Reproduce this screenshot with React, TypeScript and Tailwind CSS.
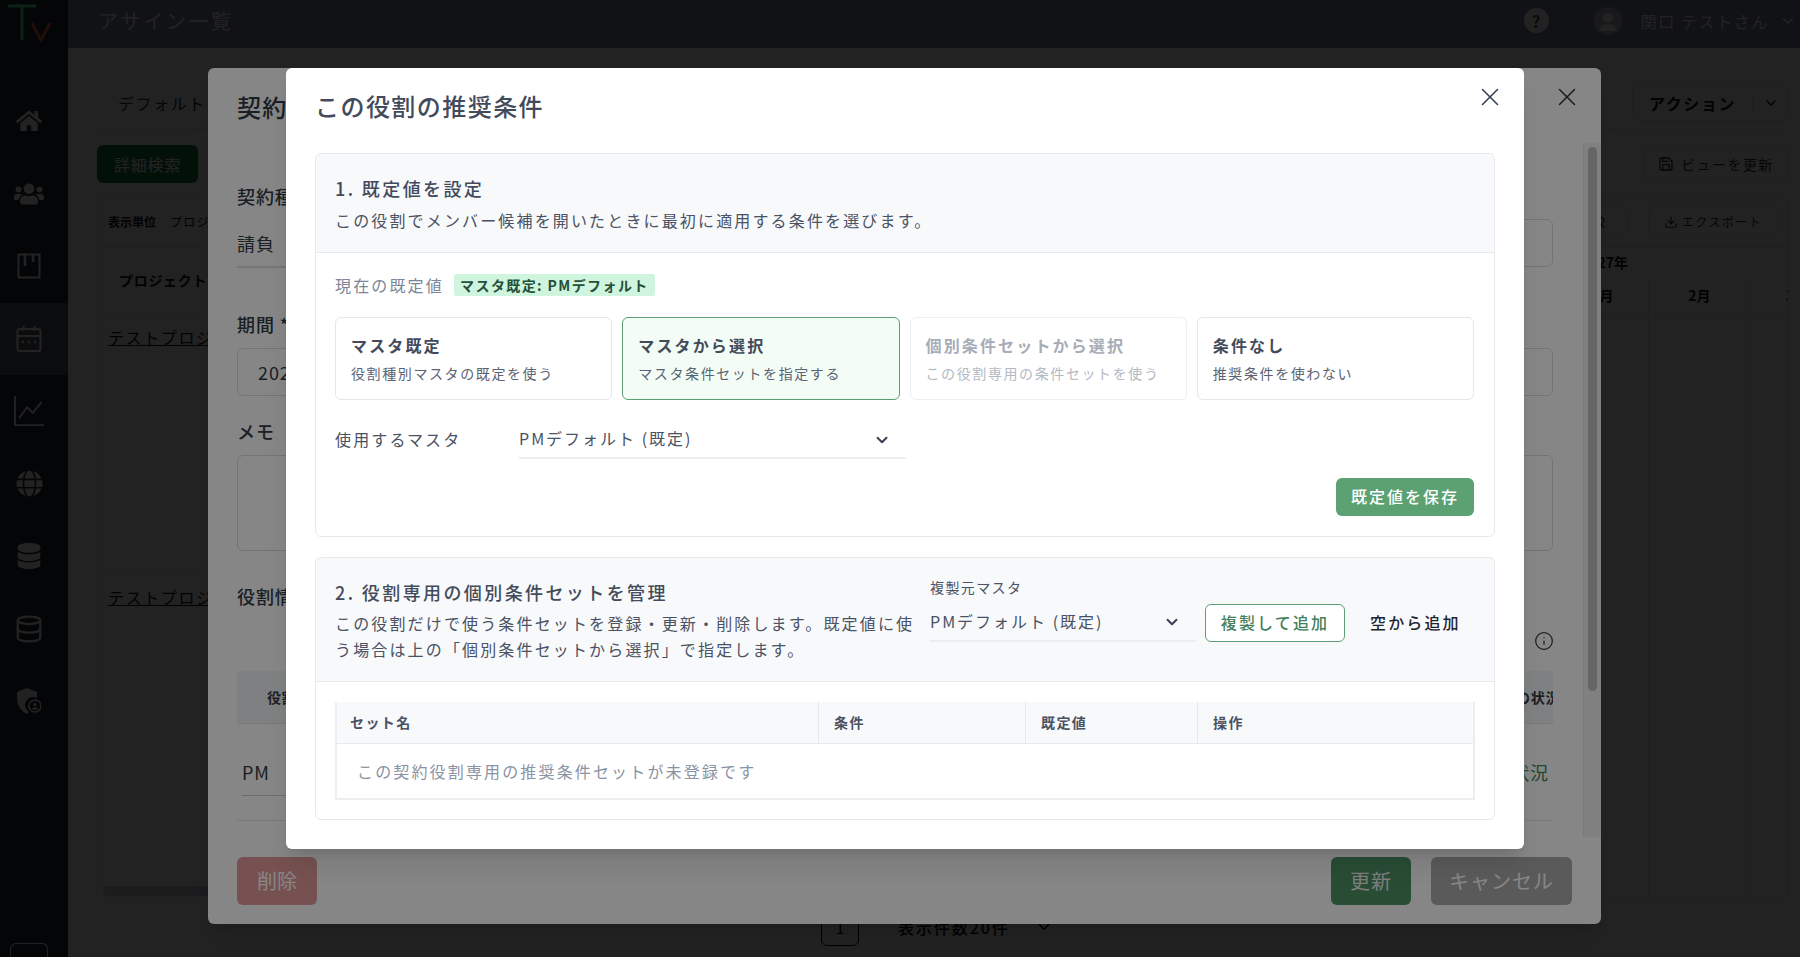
import { ChevronDown, Database, Download, Info, Save, X } from 'lucide-react';
import { BsGraphUp } from 'react-icons/bs';
import { FaDatabase, FaGlobe, FaHome, FaUsers } from 'react-icons/fa';

function SideIcon({ children, active }: { children: React.ReactNode; active?: boolean }) {
  return (
    <div className={`flex h-[72.5px] shrink-0 items-center justify-center pr-[10px] text-white ${active ? 'bg-[#52586b]' : ''}`}>
      {children}
    </div>
  );
}

function Sidebar() {
  return (
    <aside className="flex w-[68px] shrink-0 flex-col bg-[#252b38]">
      <div className="h-[85px] shrink-0">
        <svg width="60" height="48" viewBox="0 0 60 48" fill="none" strokeWidth="3">
          <path d="M8 6h28M22 6v34" stroke="#60ffa0" />
          <path d="M32 23l9 17 9-17" stroke="#ff6050" />
        </svg>
      </div>
      <SideIcon><FaHome size={26} /></SideIcon>
      <SideIcon><FaUsers size={30} /></SideIcon>
      <SideIcon>
        <svg width="24" height="26" viewBox="0 0 24 26" fill="none" stroke="currentColor" strokeWidth="2">
          <rect x="1.5" y="1.5" width="21" height="23" />
          <path d="M8 2v11M16 2v7" strokeWidth="2.6" />
        </svg>
      </SideIcon>
      <SideIcon active>
        <svg width="26" height="28" viewBox="0 0 26 28" fill="none" stroke="currentColor" strokeWidth="2.2">
          <rect x="1.5" y="4" width="23" height="22" rx="2" />
          <path d="M1.5 11h23M7.5 1v5M18.5 1v5" />
          <path d="M6 17h2M12 17h2M18 17h2" strokeWidth="2.4" />
        </svg>
      </SideIcon>
      <SideIcon><BsGraphUp size={30} /></SideIcon>
      <SideIcon><FaGlobe size={27} /></SideIcon>
      <SideIcon><FaDatabase size={26} /></SideIcon>
      <SideIcon><Database size={30} strokeWidth={1.8} /></SideIcon>
      <SideIcon>
        <svg width="24" height="26" viewBox="0 0 24 26" fill="currentColor">
          <path d="M10 0l10 4v6a8 8 0 0 0-8 14l-2 2C4 23 0 17 0 10V4z" />
          <circle cx="18" cy="18" r="6" fill="none" stroke="currentColor" strokeWidth="1.6" />
          <circle cx="18" cy="16.4" r="1.7" />
          <path d="M14.8 21.5a3.4 3.4 0 0 1 6.4 0z" />
        </svg>
      </SideIcon>
      <div className="ml-[10px] mt-auto h-[14px] w-[38px] shrink-0 rounded-t-md border border-b-0 border-white" />
    </aside>
  );
}

function Page() {
  return (
    <main className="flex min-w-0 flex-1 flex-col bg-white">
      <header className="flex h-12 shrink-0 items-center bg-[#82899c] pb-[7px] pl-[30px] pr-[3px] text-white">
        <h1 className="text-[20px] tracking-[2.6px]">アサイン一覧</h1>
        <div className="ml-auto flex h-[25px] w-[25px] items-center justify-center rounded-full bg-white text-[16px] font-bold text-[#555]">?</div>
        <div className="ml-[45px] flex h-[28px] w-[28px] items-end justify-center overflow-hidden rounded-full bg-[#b8bec8]">
          <div className="relative h-[22px] w-[16px]">
            <div className="mx-auto h-[10px] w-[10px] rounded-full bg-white" />
            <div className="mt-[1px] h-[7px] w-[16px] rounded-t-md bg-white" />
          </div>
        </div>
        <span className="ml-[19px] text-[16px] tracking-[0.1em]">関口 テストさん</span>
        <ChevronDown size={18} className="ml-[10px]" />
      </header>
      <div className="flex min-h-0 flex-1 flex-col pl-[29px] pr-[11px] text-[#111]">
        <div className="flex h-[82px] shrink-0 items-center justify-between border-b border-[#dfe2e6] pt-[28px]">
          <span className="pl-[21px] text-[16px] tracking-[0.1em] text-[#333]">デフォルト</span>
          <div className="flex h-[37px] w-[157px] items-center rounded-md border border-[#dfe2e6]">
            <span className="w-[120px] border-r border-[#dfe2e6] text-center text-[16px] font-bold tracking-[0.1em]">アクション</span>
            <ChevronDown size={16} className="ml-[10px]" />
          </div>
        </div>
        <div className="flex h-[65px] shrink-0 items-center justify-between pt-[3px]">
          <div className="flex h-[38px] w-[101px] items-center justify-center rounded-md bg-[#1e7b43] text-[16px] tracking-[0.05em] text-white">詳細検索</div>
          <div className="flex h-[38px] w-[146px] items-center justify-center gap-[7px] rounded-md border border-[#dfe2e6] text-[14px] tracking-[0.1em] text-[#333]">
            <Save size={16} />ビューを更新
          </div>
        </div>
        <div className="flex h-[703px] shrink-0 flex-col overflow-hidden rounded-md border border-[#e5e7eb]">
          <div className="flex h-[52px] shrink-0 items-center justify-between border-b border-[#e5e7eb] pl-[10px] pr-[10px]">
            <span className="text-[12px] font-bold">表示単位<span className="ml-[14px] font-normal tracking-[0.1em]">プロジェクト</span></span>
            <div className="flex items-center gap-[20px]">
              <div className="flex h-[32px] w-[70px] items-center justify-center rounded-md border border-[#e5e7eb] text-[12px]">比較</div>
              <div className="flex h-[32px] w-[130px] items-center justify-center gap-[4px] rounded-md border border-[#e5e7eb] text-[12px] tracking-[0.12em] text-[#333]">
                <Download size={14} />エクスポート
              </div>
            </div>
          </div>
          <div className="flex min-h-0 flex-1">
            <div className="flex-1">
              <div className="flex h-[65px] items-center pb-[1px] pl-[21px] text-[14px] font-bold tracking-[0.05em]">プロジェクト</div>
              <div className="h-[258px] border-y border-[#e5e7eb] pl-[10px] pt-[11px]">
                <span className="text-[16px] tracking-[0.1em] underline">テストプロジェクト</span>
              </div>
              <div className="h-[315px] pl-[10px] pt-[14px]">
                <span className="text-[16px] tracking-[0.1em] underline">テストプロジェクト</span>
              </div>
              <div className="ml-[5px] h-[10px] w-[700px] rounded-full bg-[#cfd2d6]" />
            </div>
            <div className="mr-[-55px] w-[291px] shrink-0">
              <div className="h-[28px] pl-[29px] pt-[4px] text-[14px] font-bold">2027年</div>
              <div className="flex h-[40px] border-b border-[#e5e7eb] text-[14px] font-bold">
                <div className="flex w-[97px] items-center justify-center border-r border-[#e5e7eb] pl-[5px]">1月</div>
                <div className="flex w-[97px] items-center justify-center border-r border-[#e5e7eb] pl-[5px]">2月</div>
                <div className="flex w-[97px] items-center justify-center pl-[5px]">3月</div>
              </div>
              <div className="flex h-[580px]">
                <div className="w-[97px] border-r border-[#e5e7eb]" />
                <div className="w-[97px] border-r border-[#e5e7eb]" />
              </div>
            </div>
          </div>
        </div>
        <div className="mt-[10px] flex items-center pl-[724px]">
          <div className="flex h-[38px] w-[38px] items-center justify-center rounded-md border border-[#111] text-[16px]">1</div>
          <span className="ml-[39px] text-[16px] font-medium tracking-[0.12em]">表示件数20件</span>
          <ChevronDown size={18} className="ml-[25px]" />
        </div>
      </div>
    </main>
  );
}

function OuterModal() {
  return (
    <div className="absolute left-[208px] top-[68px] flex h-[856px] w-[1393px] flex-col rounded-md bg-white text-[#333b45] shadow-xl">
      <div className="flex h-[75px] shrink-0 items-start justify-between pl-[29px] pr-[19px]">
        <h2 className="mt-[21px] text-[24px] font-medium leading-[36px] tracking-[0.05em]">契約役割の編集</h2>
        <X size={30} strokeWidth={1.3} className="mt-[14px]" />
      </div>
      <div className="flex min-h-0 flex-1">
        <div className="min-w-0 flex-1 overflow-hidden pl-[29px] pr-[30px]">
          <div className="mt-[39px] grid grid-cols-2 gap-x-5">
            <div>
              <div className="text-[18px] font-medium leading-[28px] tracking-[0.05em]">契約種別</div>
              <div className="mt-[10px] flex h-[48px] items-center border-b-2 border-[#dde1e6] text-[18px] tracking-[0.05em]">請負</div>
            </div>
            <div className="mt-[37px] h-[48px] rounded-md border border-[#d8dce2]" />
          </div>
          <div className="mt-[42px] text-[18px] font-medium leading-[28px] tracking-[0.05em]">期間 *</div>
          <div className="mt-[10px] flex h-[48px] items-center rounded-md border border-[#d8dce2] pl-[20px] text-[18px] tracking-[0.05em]">2027/01/01</div>
          <div className="mt-[21px] text-[18px] font-medium leading-[28px] tracking-[0.05em]">メモ</div>
          <div className="mt-[10px] h-[96px] rounded-md border border-[#d8dce2]" />
          <div className="mt-[31px] flex h-[28px] items-center text-[18px] font-medium tracking-[0.05em]">役割情報</div>
          <div className="flex h-[61px] items-end justify-end">
            <Info size={20} strokeWidth={1.5} className="mb-[20px] mr-[-1px]" />
          </div>
          <div className="flex h-[52px] items-center justify-between bg-[#f1f3f6] text-[14px] font-bold tracking-[0.05em]">
            <span className="pl-[30px]">役割</span>
            <span className="w-[37px] overflow-hidden whitespace-nowrap">の状況</span>
          </div>
          <div className="flex h-[98px] items-start justify-between border-y border-[#e3e6ea] pt-[35px] text-[18px] tracking-[0.05em]">
            <span className="ml-[5px] w-[60px] border-b border-[#c9ced6] pb-[9px]">PM</span>
            <span className="pr-[4px] text-[#3f8a5c]">状況</span>
          </div>
        </div>
        <div className="h-[694px] w-[18px] shrink-0 border-l border-[#e3e6ea] bg-[#f3f3f3] px-[4px] pt-[4px]">
          <div className="h-[544px] rounded-full bg-[#c0c0c0]" />
        </div>
      </div>
      <div className="flex h-[87px] shrink-0 items-center justify-between px-[29px]">
        <div className="flex h-[48px] w-[80px] items-center justify-center rounded-md bg-[#e39a9a] text-[20px] text-white">削除</div>
        <div className="flex gap-5">
          <div className="flex h-[48px] w-[80px] items-center justify-center rounded-md bg-[#4f9166] text-[20px] tracking-[0.05em] text-[#eee]">更新</div>
          <div className="flex h-[48px] w-[141px] items-center justify-center rounded-md bg-[#acacac] text-[20px] tracking-[0.05em] text-white">キャンセル</div>
        </div>
      </div>
    </div>
  );
}

function ModeCard({ title, sub, selected, disabled }: { title: string; sub: string; selected?: boolean; disabled?: boolean }) {
  return (
    <div className={`h-[83px] rounded-md border px-[15px] pt-[14px] ${selected ? 'border-[#5d9e75] bg-[#f3fdf6]' : disabled ? 'border-[#eceef2]' : 'border-[#e3e6eb]'}`}>
      <div className={`text-[16px] font-bold leading-[26px] ${disabled ? 'text-[#a7acb6]' : 'text-[#434b5b]'}`}>{title}</div>
      <div className={`mt-[3px] text-[14px] leading-[24px] tracking-[1.6px] ${disabled ? 'text-[#b4b9c2]' : 'text-[#5a6373]'}`}>{sub}</div>
    </div>
  );
}

function MasterSelect({ width, height }: { width: string; height: string }) {
  return (
    <div className={`flex items-center justify-between border-b-2 border-[#eceef2] pr-[15px] text-[16px] tracking-[2px] text-[#4a5263] ${width} ${height}`}>
      <span className="pb-[3px]">PMデフォルト (既定)</span>
      <ChevronDown size={18} strokeWidth={2.6} className="text-[#374151]" />
    </div>
  );
}

function InnerModal() {
  return (
    <div className="absolute left-[286px] top-[68px] h-[781px] w-[1238px] rounded-md bg-white pl-[29px] pr-[29px] tracking-[2.15px] text-[#4a5263] shadow-xl">
      <div className="flex h-[85px] items-start justify-between">
        <h2 className="mt-[20px] text-[24px] font-medium leading-[36px] tracking-[1.45px] text-[#434b5b]">この役割の推奨条件</h2>
        <X size={30} strokeWidth={1.3} className="mr-[-10px] mt-[14px] text-[#374151]" />
      </div>

      <section className="rounded-md border border-[#e6e9ee]">
        <div className="rounded-t-md border-b border-[#e6e9ee] bg-[#f8f9fb] px-[19px] pb-[19px] pt-[20px]">
          <h3 className="text-[18px] font-medium leading-[28px] tracking-[2.4px] text-[#434b5b]">1. 既定値を設定</h3>
          <p className="mt-[5px] text-[16px] leading-[26px]">この役割でメンバー候補を開いたときに最初に適用する条件を選びます。</p>
        </div>
        <div className="pb-[20px] pl-[19px] pr-[20px] pt-[21px]">
          <div className="flex h-[22px] items-center gap-[10px]">
            <span className="text-[16px] text-[#7d8696]">現在の既定値</span>
            <span className="flex h-[22px] w-[201px] items-center justify-center rounded-[2px] bg-[#d0f5de] text-[14px] font-bold tracking-[1.4px] text-[#24503a]">マスタ既定: PMデフォルト</span>
          </div>
          <div className="mt-[21px] grid grid-cols-4 gap-[10px]">
            <ModeCard title="マスタ既定" sub="役割種別マスタの既定を使う" />
            <ModeCard title="マスタから選択" sub="マスタ条件セットを指定する" selected />
            <ModeCard title="個別条件セットから選択" sub="この役割専用の条件セットを使う" disabled />
            <ModeCard title="条件なし" sub="推奨条件を使わない" />
          </div>
          <div className="mt-[22px] flex items-center">
            <span className="w-[184px] pb-[3px] text-[16px]">使用するマスタ</span>
            <MasterSelect width="w-[387px]" height="h-[37px]" />
          </div>
          <div className="mt-[19px] flex justify-end">
            <button className="h-[38px] w-[138px] rounded-md bg-[#5ba172] pb-[2px] text-[16px] font-medium tracking-[2px] text-white">既定値を保存</button>
          </div>
        </div>
      </section>

      <section className="mt-5 rounded-md border border-[#e6e9ee]">
        <div className="flex rounded-t-md border-b border-[#e6e9ee] bg-[#f8f9fb] pb-[19px] pl-[19px] pt-[20px]">
          <div className="w-[583px] shrink-0">
            <h3 className="text-[18px] font-medium leading-[28px] tracking-[2.4px] text-[#434b5b]">2. 役割専用の個別条件セットを管理</h3>
            <p className="mt-[4px] text-[16px] leading-[26px]">この役割だけで使う条件セットを登録・更新・削除します。既定値に使う場合は上の「個別条件セットから選択」で指定します。</p>
          </div>
          <div className="ml-3 w-[266px] shrink-0">
            <div className="mt-[-1px] text-[14px] leading-[20px] tracking-[1.4px]">複製元マスタ</div>
            <div className="mt-[7px]">
              <MasterSelect width="w-full" height="h-[38px]" />
            </div>
          </div>
          <button className="ml-[9px] mt-[26px] h-[38px] w-[140px] rounded-md border border-[#5d9e75] bg-white pb-[2px] text-[16px] font-medium text-[#437f5b]">複製して追加</button>
          <button className="ml-[25px] mt-[26px] h-[38px] whitespace-nowrap pb-[2px] text-[16px] font-medium text-[#1f2430]">空から追加</button>
        </div>
        <div className="pb-[19px] pl-[19px] pr-[19px] pt-[20px]">
          <div className="border-x-2 border-b-2 border-[#eceef2]">
            <div className="grid h-[42px] grid-cols-[482px_207px_172px_1fr] items-stretch border-b border-[#e6e9ee] bg-[#f8f9fb] text-[14px] font-bold tracking-[1.4px]">
              <div className="flex items-center border-r border-[#e6e9ee] pl-[13px]">セット名</div>
              <div className="flex items-center border-r border-[#e6e9ee] pl-[15px]">条件</div>
              <div className="flex items-center border-r border-[#e6e9ee] pl-[15px]">既定値</div>
              <div className="flex items-center pl-[15px]">操作</div>
            </div>
            <div className="flex h-[54px] items-center pl-[20px] text-[16px] text-[#8a93a3]">この契約役割専用の推奨条件セットが未登録です</div>
          </div>
        </div>
      </section>
    </div>
  );
}

export default function App() {
  return (
    <div className="relative flex h-[957px] w-[1800px] overflow-hidden font-['Noto_Sans_CJK_JP','Noto_Sans',sans-serif]">
      <Sidebar />
      <Page />
      <div className="absolute inset-0 bg-[#000000bd]" />
      <OuterModal />
      <div className="absolute inset-0 bg-[#00000079]" />
      <InnerModal />
    </div>
  );
}
